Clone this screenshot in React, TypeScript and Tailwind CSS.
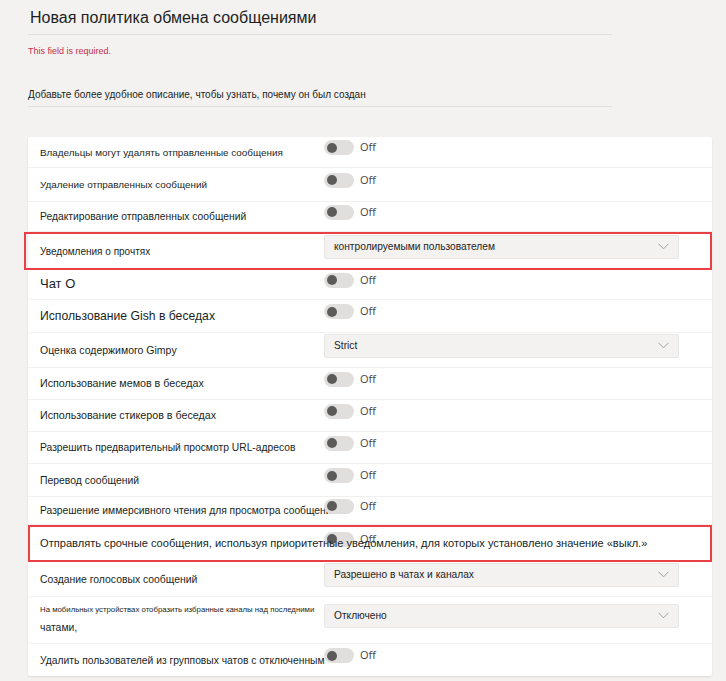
import React from 'react';

type Row = {
  label: string;
  size: string;
  h: string;
  control: 'toggle' | 'select';
  value?: string;
  highlight?: 'wide' | 'flush';
  small?: string;
};

const rows: Row[] = [
  { label: 'Владельцы могут удалять отправленные сообщения', size: 'text-[9.9px]', h: 'h-[31px]', control: 'toggle' },
  { label: 'Удаление отправленных сообщений', size: 'text-[9.9px]', h: 'h-[34px]', control: 'toggle' },
  { label: 'Редактирование отправленных сообщений', size: 'text-[10.3px]', h: 'h-[30px]', control: 'toggle' },
  { label: 'Уведомления о прочтях', size: 'text-[10px]', h: 'h-[38px]', control: 'select', value: 'контролируемыми пользователем', highlight: 'wide' },
  { label: 'Чат О', size: 'text-[13px]', h: 'h-[30px]', control: 'toggle' },
  { label: 'Использование Gish в беседах', size: 'text-[12.2px]', h: 'h-[33px]', control: 'toggle' },
  { label: 'Оценка содержимого Gimpy', size: 'text-[10.5px]', h: 'h-[35px]', control: 'select', value: 'Strict' },
  { label: 'Использование мемов в беседах', size: 'text-[10.7px]', h: 'h-[32px]', control: 'toggle' },
  { label: 'Использование стикеров в беседах', size: 'text-[10.7px]', h: 'h-[32px]', control: 'toggle' },
  { label: 'Разрешить предварительный просмотр URL-адресов', size: 'text-[10.3px]', h: 'h-[32px]', control: 'toggle' },
  { label: 'Перевод сообщений', size: 'text-[10.4px]', h: 'h-[33px]', control: 'toggle' },
  { label: 'Разрешение иммерсивного чтения для просмотра сообщений', size: 'text-[10.3px]', h: 'h-[28px]', control: 'toggle' },
  { label: 'Отправлять срочные сообщения, используя приоритетные уведомления, для которых установлено значение «выкл.»', size: 'text-[11.1px]', h: 'h-[37px]', control: 'toggle', highlight: 'flush' },
  { label: 'Создание голосовых сообщений', size: 'text-[10.4px]', h: 'h-[35px]', control: 'select', value: 'Разрешено в чатах и каналах' },
  { label: 'чатами,', small: 'На мобильных устройствах отобразить избранные каналы над последними', size: 'text-[10.4px]', h: 'h-[47px]', control: 'select', value: 'Отключено' },
  { label: 'Удалить пользователей из групповых чатов с отключенным', size: 'text-[10.3px]', h: 'h-[32px]', control: 'toggle' },
];

function Toggle() {
  return (
    <div className="relative z-10 flex items-center gap-[6px] -mt-[8px]">
      <div className="flex h-[15px] w-[30px] items-center rounded-full bg-[#e1dfdd] pl-[3px]">
        <div className="h-[10px] w-[10px] rounded-full bg-[#5c5b5a]" />
      </div>
      <span className="font-['Open_Sans',sans-serif] text-[11px] text-[#484644]">Off</span>
    </div>
  );
}

function Select({ value }: { value: string }) {
  return (
    <div className="-mt-[8px] flex h-[24px] w-[355px] items-center justify-between rounded-[2px] border border-[#e8e6e4] bg-[#f3f2f1] pl-[9px] pr-[9px]">
      <span className="text-[10.2px] text-[#252423]">{value}</span>
      <svg width="11" height="7" viewBox="0 0 11 7" fill="none">
        <path d="M0.5 0.8 L5.5 5.8 L10.5 0.8" stroke="#a19f9d" strokeWidth="1" />
      </svg>
    </div>
  );
}

function SettingRow({ row, last }: { row: Row; last: boolean }) {
  const box =
    row.highlight === 'wide'
      ? 'border-2 border-[#eb3f46] -ml-[4px] pl-[14px]'
      : row.highlight === 'flush'
        ? 'border-2 border-[#eb3f46] pl-[10px]'
        : `pl-[12px] ${last ? '' : 'border-b border-[#f1f0ef]'}`;
  // the long urgent-messages label is painted over its toggle
  const layer = row.highlight === 'flush' ? 'relative z-20' : '';
  return (
    <div className={`relative flex items-center ${row.h} ${box}`}>
      <div className={`w-[284px] shrink-0 overflow-visible whitespace-nowrap -mt-[2px] text-[#201f1e] ${layer}`}>
        {row.small ? (
          <div className="leading-[18px]">
            <div className="text-[7.8px]">{row.small}</div>
            <div className={row.size}>{row.label}</div>
          </div>
        ) : (
          <span className={row.size}>{row.label}</span>
        )}
      </div>
      {row.control === 'toggle' ? <Toggle /> : <Select value={row.value ?? ''} />}
    </div>
  );
}

export default function App() {
  return (
    <div className="min-h-[681px] w-[726px] bg-[#f3f2f1] pl-[28px] pr-[14px] pt-[6px] font-['Liberation_Sans',Arial,sans-serif]">
      <div className="w-[584px]">
        <h1 className="border-b border-[#e1dfdd] pb-[4px] pl-[2px] text-[16px] leading-[24px] text-[#201f1e]">
          Новая политика обмена сообщениями
        </h1>
        <p className="pt-[10px] text-[9px] text-[#c4314b]">This field is required.</p>
        <p className="mt-[28px] border-b border-[#e1dfdd] pb-[4px] text-[10px] text-[#201f1e]">
          Добавьте более удобное описание, чтобы узнать, почему он был создан
        </p>
      </div>
      <div className="mt-[30px] rounded-[2px] bg-white shadow-[0_1px_2px_rgba(0,0,0,0.1)]">
        {rows.map((row, i) => (
          <SettingRow key={row.label} row={row} last={i === rows.length - 1} />
        ))}
      </div>
    </div>
  );
}
